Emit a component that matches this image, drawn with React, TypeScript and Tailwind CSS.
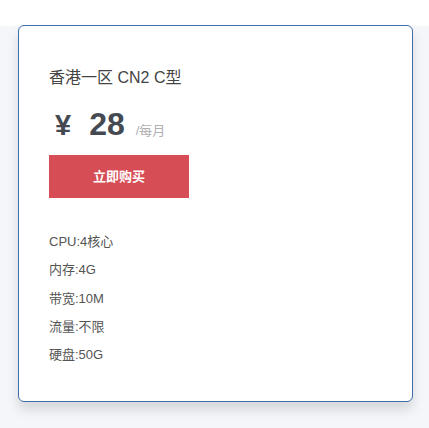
export default function App() {
  const specs = ["CPU:4核心", "内存:4G", "带宽:10M", "流量:不限", "硬盘:50G"];
  return (
    <div
      className="h-[428px] w-[429px] overflow-hidden bg-[#f5f6fa]"
      style={{ fontFamily: '"Liberation Sans", "Noto Sans CJK SC", sans-serif' }}
    >
      <div className="h-[26px] bg-white" />
      <div className="-mt-px pl-[18px]">
        <div className="h-[377px] w-[395px] rounded-[6px] border border-[#3f6ea8] bg-white pl-[30px] pt-[42px] shadow-[0_8px_12px_rgba(0,0,0,0.12)]">
          <div className="text-[16px] leading-[20px] text-[#444]">香港一区 CN2 C型</div>
          <div className="mt-[19px] flex items-baseline pl-[6px]">
            <span className="text-[29px] font-bold leading-[34px] text-[#454a52]">¥</span>
            <span className="ml-[18px] text-[32px] font-bold leading-[34px] text-[#454a52]">28</span>
            <span className="ml-[11px] text-[13px] text-[#b0b0b0]">/每月</span>
          </div>
          <button className="mt-[13px] flex h-[43px] w-[140px] items-center justify-center bg-[#d64d55] text-[13px] font-bold text-white">
            立即购买
          </button>
          <div className="mt-[36px] flex flex-col gap-[12px]">
            {specs.map((s) => (
              <div key={s} className="text-[13px] leading-[16.3px] text-[#555]">
                {s}
              </div>
            ))}
          </div>
        </div>
      </div>
    </div>
  );
}
